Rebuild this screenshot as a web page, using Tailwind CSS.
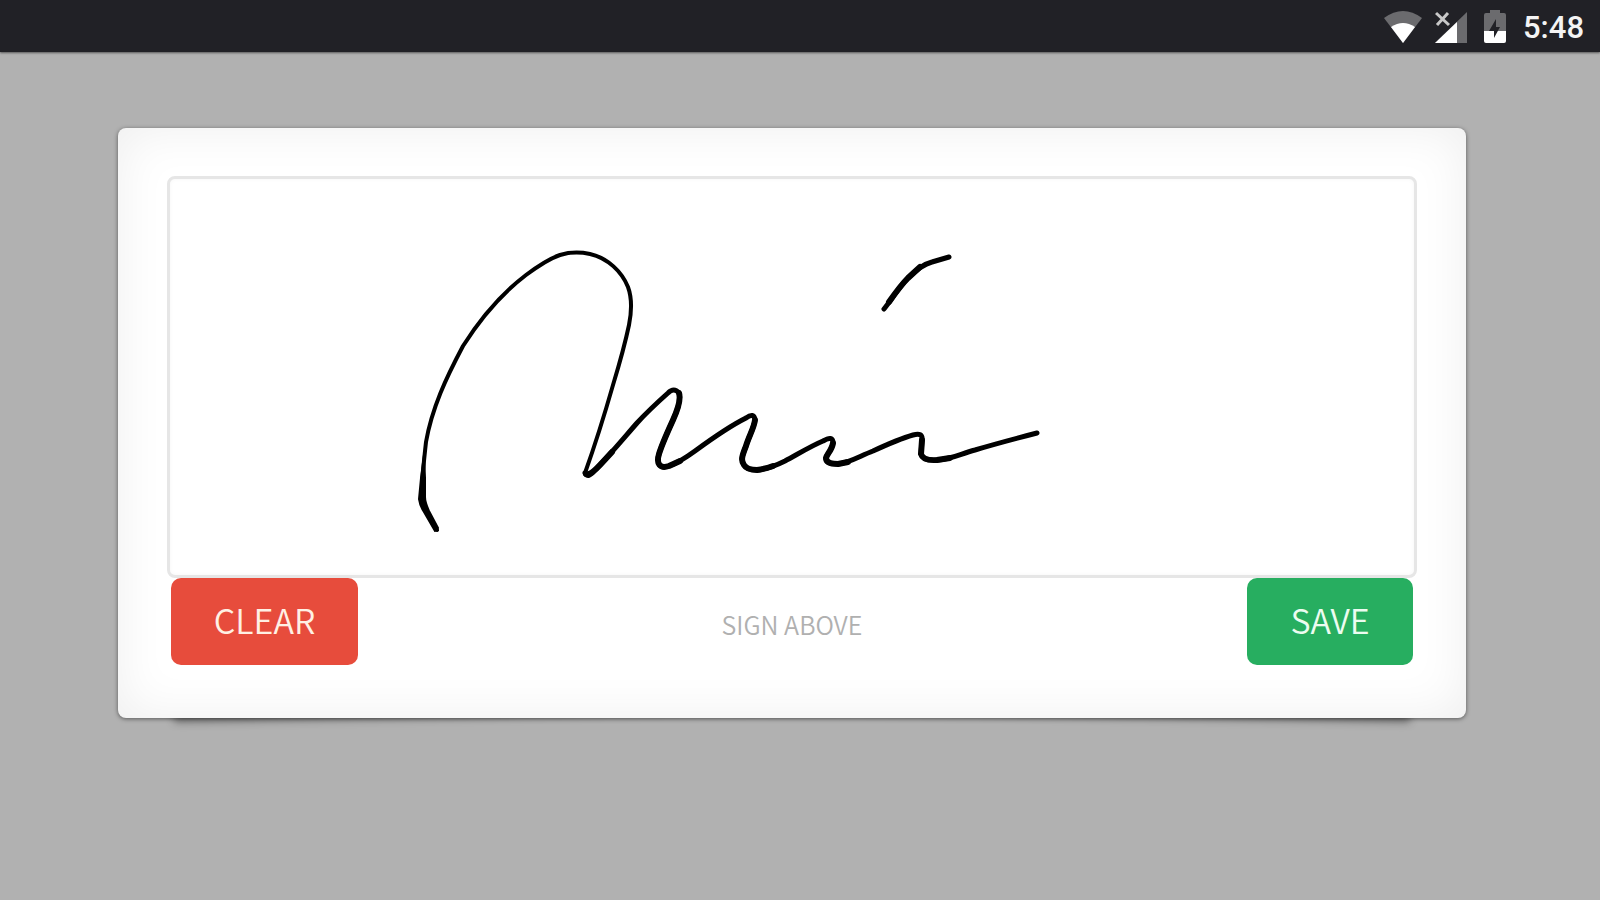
<!DOCTYPE html>
<html lang="en">
<head>
<meta charset="utf-8">
<meta name="viewport" content="width=device-width, initial-scale=1">
<title>Signature pad</title>
<script src="https://cdn.jsdelivr.net/npm/@tailwindcss/browser@4"></script>
</head>
<body class="flex min-h-screen flex-col bg-[#b1b1b1] font-['Noto_Sans_CJK_SC','Open_Sans',sans-serif]">
  <header class="flex h-[52px] items-center justify-end bg-[#212126] pt-1 pr-4 shadow-[0_1px_2px_rgba(0,0,0,0.5)]">
    <svg class="mr-3 h-9 w-10" viewBox="0 0 40 36" aria-label="Wi-Fi">
      <path d="M1 8Q20 -6 39 8L20 33Z" fill="#6b6b6e"/>
      <path d="M8 17Q20 9 32 17L20 33Z" fill="#fff"/>
    </svg>
    <svg class="mr-4 h-9 w-8" viewBox="0 0 32 36" aria-label="No signal">
      <path d="M32 2V33H0Z" fill="#6b6b6e"/>
      <path d="M22 12V33H0Z" fill="#fff"/>
      <path d="M0 0H16V17H0Z" fill="#212126"/>
      <path d="M1 3L14 15M13 3L2 15" stroke="#c8c8c8" stroke-width="3"/>
    </svg>
    <svg class="mr-4 h-9 w-6" viewBox="0 0 24 36" aria-label="Battery charging">
      <path d="M1 5Q1 3 3 3H7V0H17V3H21Q23 3 23 5V21H1Z" fill="#6b6b6e"/>
      <path d="M1 21H23V31Q23 33 21 33H3Q1 33 1 31Z" fill="#fff"/>
      <path d="M13 9L6 21H11V28L17 17H13Z" fill="#212126"/>
    </svg>
    <time class="font-['Roboto',sans-serif] text-[31px] leading-9 font-medium text-[#f4f4f4]">5:48</time>
  </header>

  <main class="relative mt-[76px] mr-[134px] ml-[118px]">
    <div class="absolute bottom-1 left-14 h-3 w-1/2 origin-bottom-left rotate-[-1deg] shadow-[0_8px_9px_rgba(0,0,0,0.4)]"></div>
    <div class="absolute right-14 bottom-1 h-3 w-1/2 origin-bottom-right rotate-[1deg] shadow-[0_8px_9px_rgba(0,0,0,0.4)]"></div>
    <section class="relative rounded-lg bg-white px-[49px] pt-12 pb-[53px] shadow-[0_1px_4px_rgba(0,0,0,0.5),inset_0_0_50px_rgba(0,0,0,0.07)]">
      <div class="overflow-hidden rounded-lg border-3 border-[#e6e6e6] bg-white shadow-[inset_0_0_4px_rgba(0,0,0,0.04)]">
        <svg class="block h-auto w-full" viewBox="170 179 1244 396" fill="none" stroke="#000" stroke-linecap="round" stroke-linejoin="round" role="img" aria-label="Signature">
          <path stroke-width="4" d="M437 530L425 510C420 498 422 478 426 442C432 408 446 378 463 346C482 316 505 291 526 275C538 266 551 258 560 255C570 252 580 252 590 254C608 258 622 272 628 287C632 298 632 310 629 325C625 344 620 362 613 385C605 413 595 445 585 473"/>
          <path fill="#000" stroke-width="2" d="M424 455L421 478L419 499Q420 506 424 512L435 531L438 528L429 511Q425 502 425 497L425 478Z"/>
          <path stroke-width="5" d="M585 473Q588 479 595 470C609 456 623 439 637 423C648 411 659 401 668 393Q674 387 679 393C681 399 678 409 673 420C668 431 662 444 659 454C656 464 660 469 669 466C678 463 684 459 695 451C710 440 732 425 746 418Q754 412 755 420C754 428 749 436 746 446C743 454 740 460 744 465Q747 470 757 470C768 469 775 466 785 461C798 454 811 446 823 441Q833 435 833 443C832 450 827 454 826 458Q826 464 838 464C849 463 860 456 873 451C886 445 899 439 913 435Q923 432 922 440L921 454Q923 461 937 460C952 459 960 454 975 450C995 444 1010 440 1037 433"/>
          <path stroke-width="6" d="M586 474Q590 476 600 465L612 452M679 393C681 399 678 409 673 420C668 431 662 444 659 454C656 464 660 469 669 466L680 461M755 420C754 428 749 436 746 446C743 454 740 460 744 465Q747 470 757 470Q765 469 773 466M833 443C832 450 827 454 826 458Q826 464 838 464L848 462M922 440L921 454Q923 461 937 460L950 458"/>
          <path stroke-width="5" d="M884 309C892 299 899 287 908 278C917 269 924 264 932 262L949 257"/>
          <path stroke-width="6" d="M889 302C896 292 902 284 908 278L920 267"/>
        </svg>
      </div>
      <div class="grid grid-cols-[1fr_auto_1fr] items-start px-1">
        <button type="button" class="h-[87px] w-[187px] rounded-[10px] bg-[#e74c3c] pb-1 text-[34px] font-[350] text-[#fff0e4]">CLEAR</button>
        <p class="pt-[26px] text-[25px] leading-10 font-[350] text-[#b0b0b0]">SIGN ABOVE</p>
        <button type="button" class="h-[87px] w-[166px] justify-self-end rounded-[10px] bg-[#27ae60] pb-1 text-[34px] font-[350] text-[#ecfcf0]">SAVE</button>
      </div>
    </section>
  </main>
</body>
</html>
